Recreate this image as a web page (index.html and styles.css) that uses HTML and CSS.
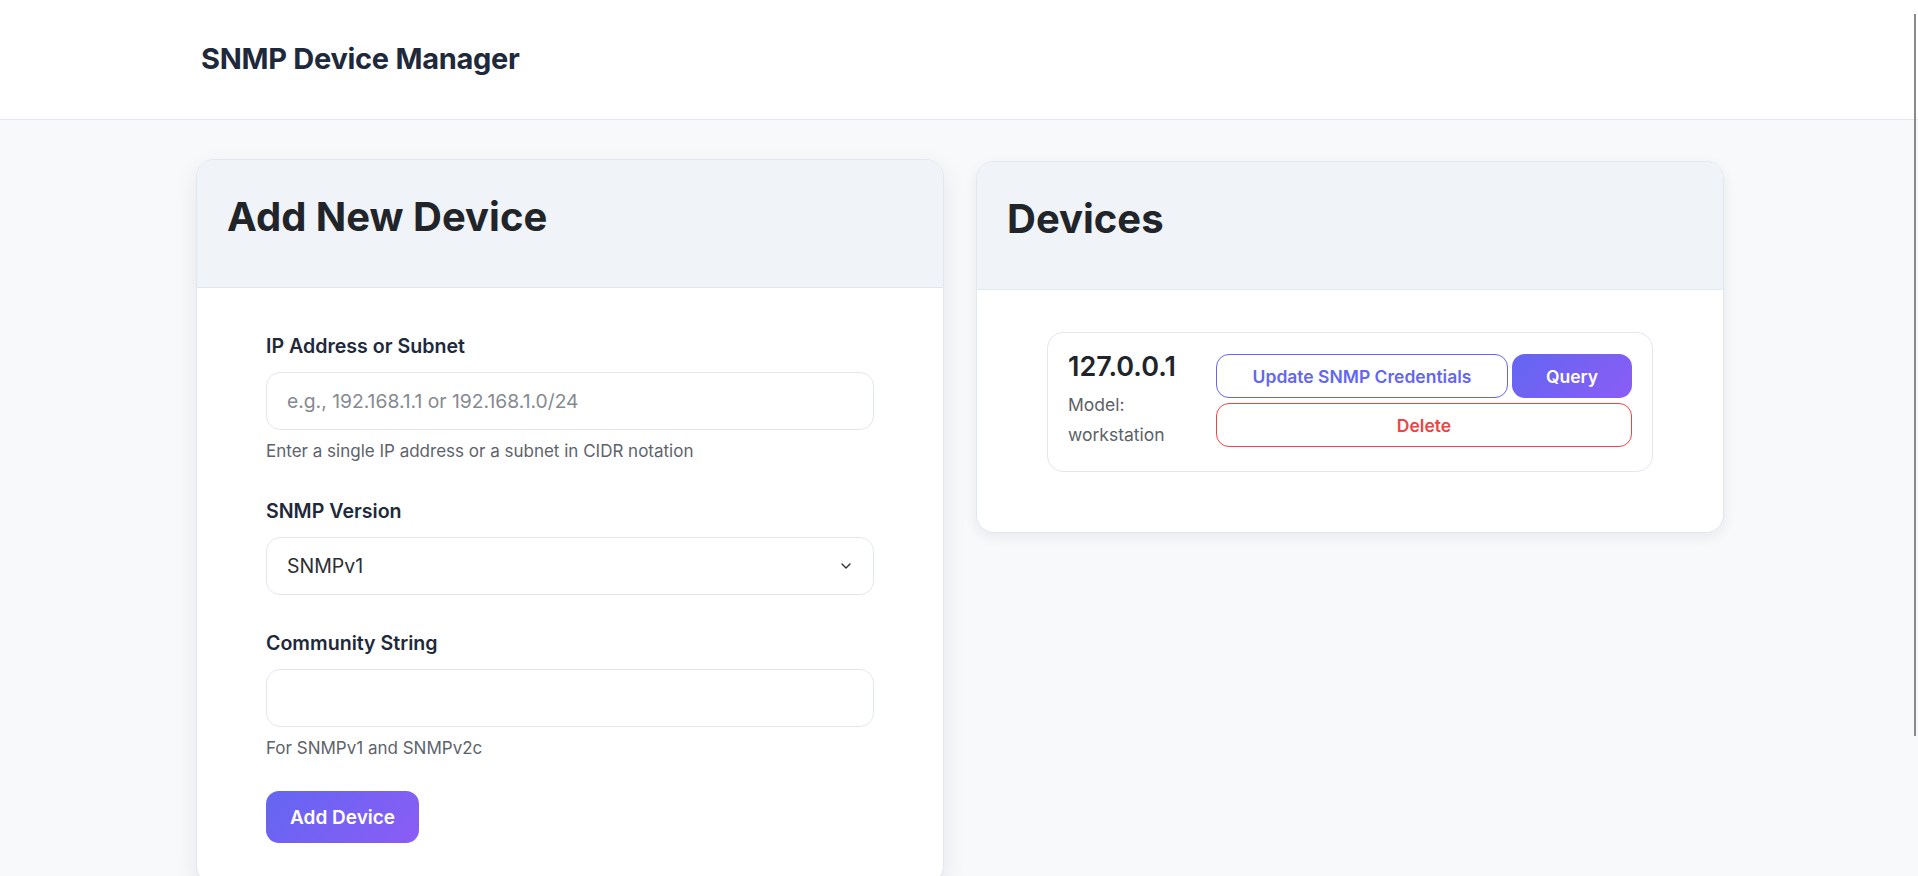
FILE: index.html
```html
<!DOCTYPE html>
<html lang="en">
<head>
<meta charset="utf-8">
<title>SNMP Device Manager</title>
<link rel="stylesheet" href="styles.css">
</head>
<body>
<header class="topbar">
  <div class="topbar__inner">
    <h1 class="brand">SNMP Device Manager</h1>
  </div>
</header>

<main class="layout">
  <section class="card card--lifted">
    <div class="card__header">
      <h2 class="card__title">Add New Device</h2>
    </div>
    <div class="card__body">
      <form class="form">
        <div class="field">
          <label class="field__label" for="ip">IP Address or Subnet</label>
          <input class="field__control" id="ip" type="text" placeholder="e.g., 192.168.1.1 or 192.168.1.0/24">
          <p class="field__hint">Enter a single IP address or a subnet in CIDR notation</p>
        </div>
        <div class="field">
          <label class="field__label">SNMP Version</label>
          <div class="field__control select">
            <span class="select__value">SNMPv1</span>
            <svg class="select__chevron" width="10" height="6" viewBox="0 0 10 6" aria-hidden="true"><path d="M1 1l4 4 4-4" fill="none" stroke="#333" stroke-width="1.4" stroke-linecap="round" stroke-linejoin="round"/></svg>
          </div>
        </div>
        <div class="field field--last">
          <label class="field__label" for="community">Community String</label>
          <input class="field__control" id="community" type="text">
          <p class="field__hint">For SNMPv1 and SNMPv2c</p>
        </div>
        <button type="button" class="btn btn--gradient btn--lg">Add Device</button>
      </form>
    </div>
  </section>

  <section class="card">
    <div class="card__header">
      <h2 class="card__title">Devices</h2>
    </div>
    <div class="card__body card__body--list">
      <div class="device">
        <div class="device__info">
          <div class="device__ip">127.0.0.1</div>
          <div class="device__model">Model: workstation</div>
        </div>
        <div class="device__actions">
          <button type="button" class="btn btn--outline">Update SNMP Credentials</button>
          <button type="button" class="btn btn--gradient">Query</button>
          <button type="button" class="btn btn--danger device__delete">Delete</button>
        </div>
      </div>
    </div>
  </section>
</main>

<div class="scroll-thumb"></div>
</body>
</html>
```

FILE: styles.css
```css
* { box-sizing: border-box; }

html, body {
  margin: 0;
  padding: 0;
  overflow: hidden;
}

body {
  font-family: Inter, "Liberation Sans", sans-serif;
  background: #f8f9fb;
  color: #1e293b;
  height: 876px;
}

.topbar {
  background: #ffffff;
  border-bottom: 1px solid #e3e7ee;
  height: 120px;
  display: flex;
  align-items: center;
}

.topbar__inner {
  width: 1530px;
  margin: 0 auto;
  padding-left: 7px;
}

.brand {
  margin: 0;
  font-size: 29px;
  font-weight: 700;
  color: #1e293b;
  letter-spacing: -0.01em;
  line-height: 1.2;
}

.layout {
  width: 1530px;
  margin: 0 auto;
  padding: 41px 0 0 2px;
  display: grid;
  grid-template-columns: 748px 748px;
  column-gap: 32px;
  align-items: start;
}

.card {
  background: #ffffff;
  border: 1px solid #e2e7ef;
  border-radius: 18px;
  box-shadow: 0 4px 14px rgba(15, 23, 42, 0.07);
  overflow: hidden;
}

.card--lifted {
  transform: translateY(-2px);
  box-shadow: 0 8px 24px rgba(15, 23, 42, 0.08);
}

.card__header {
  background: #f0f3f8;
  border-bottom: 1px solid #e2e7ef;
  padding: 33px 30px 46px;
}

.card__title {
  margin: 0;
  font-size: 40px;
  line-height: 48px;
  font-weight: 700;
  color: #212529;
}

.card__body {
  padding: 42px 40px 40px;
}

.card__body--list {
  padding-bottom: 60px;
}

/* form */
.form {
  max-width: 608px;
  margin: 0 auto;
  padding-top: 3px;
}

.field {
  margin-bottom: 35px;
}

.field--last {
  margin-bottom: 31px;
}

.field__label {
  display: block;
  font-size: 19.6px;
  line-height: 27px;
  font-weight: 600;
  color: #1e293b;
  margin-bottom: 12px;
}

.field__control {
  display: block;
  width: 100%;
  height: 58px;
  border: 1px solid #e2e7ef;
  border-radius: 14px;
  background: #ffffff;
  padding: 0 20px;
  font-family: inherit;
  font-size: 19.3px;
  color: #333;
  outline: none;
}

.field__control::placeholder {
  color: #858a92;
}

.select {
  display: flex;
  align-items: center;
  justify-content: space-between;
  padding-right: 22px;
}

.select__value {
  font-size: 19.5px;
  color: #2b2f33;
}

.select__chevron {
  display: block;
}

.field__hint {
  margin: 9px 0 0;
  font-size: 17px;
  line-height: 24px;
  color: #5d636b;
}

/* buttons */
.btn {
  font-family: inherit;
  font-size: 17.5px;
  font-weight: 600;
  height: 44px;
  border-radius: 13px;
  padding: 0 20px;
  cursor: pointer;
  background: #ffffff;
}

.btn--gradient {
  background: linear-gradient(135deg, #6366f1 0%, #8b5cf6 100%);
  border: none;
  color: #ffffff;
}

.btn--lg {
  height: 52px;
  padding: 0 24px;
  font-size: 19px;
  border-radius: 13px;
}

.btn--outline {
  border: 1px solid #6366f1;
  color: #6366f1;
}

.btn--danger {
  border: 1px solid #ef4444;
  color: #ef4444;
}

/* device */
.device {
  max-width: 606px;
  margin: 0 auto;
  border: 1px solid #e2e7ef;
  border-radius: 16px;
  padding: 20px;
  display: flex;
  align-items: flex-start;
  gap: 18px;
}

.device__info {
  flex: 1 1 auto;
  min-width: 0;
}

.device__ip {
  font-size: 27px;
  line-height: 28.8px;
  font-weight: 600;
  color: #212529;
}

.device__model {
  margin-top: 8px;
  font-size: 17.5px;
  line-height: 30.5px;
  color: #5c6168;
}

.device__actions {
  flex: 0 0 416px;
  display: grid;
  grid-template-columns: 1fr 120px;
  column-gap: 4px;
  row-gap: 5px;
  margin-top: 1px;
}

.device__delete {
  grid-column: 1 / -1;
}

.scroll-thumb {
  position: fixed;
  top: 14px;
  right: 2px;
  width: 2px;
  height: 722px;
  background: #8a8a8a;
}
```
